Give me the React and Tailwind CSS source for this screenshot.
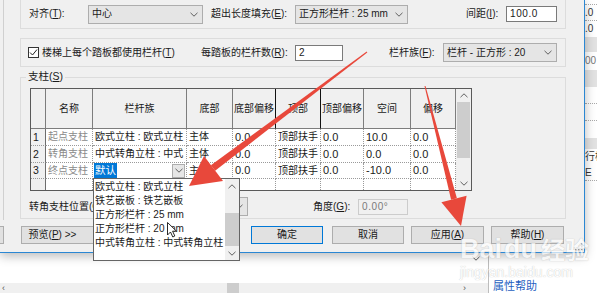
import React from "react";

const Chevron = () => (
  <svg width="8" height="5" viewBox="0 0 8 5" className="shrink-0">
    <path d="M0.5 0.8 L4 4.2 L7.5 0.8" fill="none" stroke="#606060" strokeWidth="1" />
  </svg>
);
const ChevronUp = () => (
  <svg width="8" height="5" viewBox="0 0 8 5" className="shrink-0">
    <path d="M0.5 4.2 L4 0.8 L7.5 4.2" fill="none" stroke="#606060" strokeWidth="1" />
  </svg>
);

function Combo({ className, text }) {
  return (
    <div className={"flex h-[19px] shrink-0 items-center justify-between border border-[#adadad] bg-[#e5e5e5] pl-[3px] pr-[4px] " + className}>
      <span className="whitespace-nowrap">{text}</span>
      <Chevron />
    </div>
  );
}

function Input({ className, text }) {
  return (
    <div className={"flex h-[16px] shrink-0 items-center border border-[#7a7a7a] bg-white pl-[3px] tracking-[0.6px] " + className}>
      {text}
    </div>
  );
}

function Btn({ className, children }) {
  return (
    <div className={"flex h-[18px] shrink-0 items-center justify-center border bg-[#e1e1e1] " + className}>
      {children}
    </div>
  );
}

const H = "flex items-center justify-center border-r border-b border-[#7d7d7d] bg-[#f0f0f0] whitespace-nowrap";
const HB = "flex items-center justify-center border-r border-b border-r-[#111] border-b-[#7d7d7d] bg-[#f0f0f0] whitespace-nowrap";
const RN = "flex items-center pl-[2px] border-r border-b border-r-[#6d6d6d] border-b-[#9a9a9a] [border-bottom-style:dotted] bg-[#f0f0f0] text-[10.5px]";
const C = "flex items-center overflow-hidden whitespace-nowrap pl-[2px] border-r border-b border-dotted border-[#9a9a9a] bg-white";
const CN = "flex items-center overflow-hidden whitespace-nowrap pl-[2px] border-r border-b border-dotted border-[#9a9a9a] bg-white text-[11px]";
const CG = "flex items-center overflow-hidden whitespace-nowrap pl-[2px] border-r border-b border-dotted border-[#9a9a9a] bg-white text-[#8a8a8a]";
const CE = "border-r border-dotted border-[#9a9a9a] bg-white";

export default function App() {
  return (
    <div className="relative h-[293px] w-[597px] overflow-hidden bg-white text-[10px] leading-none text-[#1a1a1a] font-['Liberation_Sans','Noto_Sans_CJK_SC',sans-serif]">
      <div className="flex h-[253px]">
        {/* dialog */}
        <div className="relative z-10 flex h-[253px] w-[585px] shrink-0 border-b border-r border-[#2b87d3] bg-[#f0f0f0] shadow-[0_3px_10px_rgba(0,0,0,0.28)]">
          <div className="flex w-[4px] shrink-0 flex-col">
            <div className="h-[220px] border-r border-[#d0d0d0]" />
            <div className="mt-[6px] h-[18px] border-y border-r border-[#adadad] bg-[#e1e1e1]" />
          </div>
          <div className="flex flex-1 flex-col">
            {/* group 1 */}
            <div className="ml-[16px] flex h-[29px] w-[546px] items-center border-x border-b border-[#dcdcdc] pl-[8px]">
              <span className="w-[59px] shrink-0">对齐(<u>T</u>):</span>
              <Combo className="w-[115px]" text="中心" />
              <span className="ml-[8px] w-[84px] shrink-0 whitespace-nowrap">超出长度填充(<u>E</u>):</span>
              <Combo className="w-[113px]" text="正方形栏杆 :  25 mm" />
              <span className="ml-[58px] w-[40px] shrink-0 whitespace-nowrap">间距(<u>I</u>):</span>
              <Input className="w-[51px]" text="100.0" />
            </div>
            {/* group 2 */}
            <div className="ml-[16px] mt-[9px] flex h-[29px] w-[546px] items-center border border-[#dcdcdc] pl-[7px]">
              <div className="flex w-[173px] shrink-0 items-center gap-[3px]">
                <div className="flex h-[11px] w-[11px] items-center justify-center border border-[#333] bg-white">
                  <svg width="9" height="9" viewBox="0 0 9 9">
                    <path d="M1 4.5 L3.5 7 L8 1.5" fill="none" stroke="#222" strokeWidth="1" />
                  </svg>
                </div>
                <span className="whitespace-nowrap">楼梯上每个踏板都使用栏杆(<u>T</u>)</span>
              </div>
              <span className="w-[94px] shrink-0 whitespace-nowrap">每踏板的栏杆数(<u>R</u>):</span>
              <Input className="w-[48px]" text="2" />
              <span className="ml-[46px] w-[54px] shrink-0 whitespace-nowrap">栏杆族(<u>F</u>):</span>
              <Combo className="w-[114px]" text="栏杆 - 正方形 :  20" />
            </div>
            {/* group 3 */}
            <div className="relative ml-[16px] mt-[10px] h-[142px] w-[546px] border border-[#dcdcdc] pl-[8px] pt-[10px]">
              <span className="absolute left-[5px] top-[-7px] bg-[#f0f0f0] px-[2px] text-[10.5px]">支柱(<u>S</u>)</span>
              <div className="ml-[1px] flex h-[103px] w-[442px] border border-[#5a5a5a]">
                <div className="grid w-[425px] grid-cols-[15px_47px_94px_46px_43px_45px_43px_47px_45px] grid-rows-[40px_17px_17px_16px_11px]">
                  <div className={H} />
                  <div className={H}>名称</div>
                  <div className={H}>栏杆族</div>
                  <div className={H}>底部</div>
                  <div className={HB}>底部偏移</div>
                  <div className={HB}>顶部</div>
                  <div className={H}>顶部偏移</div>
                  <div className={H}>空间</div>
                  <div className={H}>偏移</div>

                  <div className={RN}>1</div>
                  <div className={CG}>起点支柱</div>
                  <div className={C}>欧式立柱 : 欧式立柱</div>
                  <div className={C}>主体</div>
                  <div className={CN}>0.0</div>
                  <div className={C}>顶部扶手</div>
                  <div className={CN}>0.0</div>
                  <div className={CN}>10.0</div>
                  <div className={CN}>0.0</div>

                  <div className={RN}>2</div>
                  <div className={CG}>转角支柱</div>
                  <div className={C}>中式转角立柱 : 中式</div>
                  <div className={C}>主体</div>
                  <div className={CN}>0.0</div>
                  <div className={C}>顶部扶手</div>
                  <div className={CN}>0.0</div>
                  <div className={CN}>0.0</div>
                  <div className={CN}>0.0</div>

                  <div className={RN}>3</div>
                  <div className={CG}>终点支柱</div>
                  <div className="flex items-center border-b border-r border-dotted border-[#9a9a9a] bg-white pl-[1px] pr-[1px]">
                    <span className="bg-[#0078d7] px-[1px] py-[2px] text-[10.5px] text-white">默认</span>
                    <div className="ml-auto flex h-[14px] w-[13px] items-center justify-center border border-[#adadad] bg-[#e6e6e6]">
                      <Chevron />
                    </div>
                  </div>
                  <div className={C}>主体</div>
                  <div className={CN}>0.0</div>
                  <div className={C}>顶部扶手</div>
                  <div className={CN}>0.0</div>
                  <div className={CN}>-10.0</div>
                  <div className={CN}>0.0</div>

                  <div className="border-r border-[#6d6d6d] bg-[#f0f0f0]" />
                  <div className={CE} />
                  <div className={CE} />
                  <div className={CE} />
                  <div className={CE} />
                  <div className={CE} />
                  <div className={CE} />
                  <div className={CE} />
                  <div className={CE} />
                </div>
                <div className="flex w-[15px] flex-col bg-[#f0f0f0]">
                  <div className="flex h-[13px] items-center justify-center"><ChevronUp /></div>
                  <div className="mx-[1px] h-[56px] bg-[#cdcdcd]" />
                  <div className="flex-1" />
                  <div className="flex h-[13px] items-center justify-center"><Chevron /></div>
                </div>
              </div>
              <div className="mt-[6px] flex h-[19px] items-center">
                <span className="w-[89px] shrink-0 whitespace-nowrap">转角支柱位置(<u>C</u>):</span>
                <Combo className="w-[130px]" text="" />
                <span className="ml-[65px] w-[45px] shrink-0 whitespace-nowrap">角度(<u>G</u>):</span>
                <div className="flex h-[16px] w-[50px] shrink-0 items-center border border-[#cccccc] bg-[#f0f0f0] pl-[3px] tracking-[0.6px] text-[#7a7a7a]">0.00°</div>
              </div>
            </div>
            {/* buttons */}
            <div className="mt-[7px] flex h-[18px] items-center">
              <Btn className="ml-[17px] w-[73px] border-[#adadad]"><span className="mr-[10px]">预览(<u>P</u>) &gt;&gt;</span></Btn>
              <Btn className="ml-[157px] w-[72px] border-[#0078d7]">确定</Btn>
              <Btn className="ml-[9px] w-[72px] border-[#adadad]">取消</Btn>
              <Btn className="ml-[7px] w-[73px] border-[#adadad]">应用(<u>A</u>)</Btn>
              <Btn className="ml-[7px] w-[73px] border-[#adadad]">帮助(<u>H</u>)</Btn>
            </div>
          </div>
          <svg className="absolute bottom-[1px] right-[1px]" width="8" height="8" viewBox="0 0 8 8">
            <rect x="6" y="0" width="1.5" height="1.5" fill="#9a9a9a" />
            <rect x="3" y="3" width="1.5" height="1.5" fill="#9a9a9a" />
            <rect x="6" y="3" width="1.5" height="1.5" fill="#9a9a9a" />
            <rect x="0" y="6" width="1.5" height="1.5" fill="#9a9a9a" />
            <rect x="3" y="6" width="1.5" height="1.5" fill="#9a9a9a" />
            <rect x="6" y="6" width="1.5" height="1.5" fill="#9a9a9a" />
          </svg>
        </div>
        {/* right panel of window behind */}
        <div className="flex flex-1 flex-col overflow-hidden bg-white text-[10px] text-[#333]">
          <div className="h-[5px] border-b border-dotted border-[#aaa]" />
          <div className="flex h-[16px] items-center border-b border-dotted border-[#aaa]">.0</div>
          <div className="flex h-[16px] items-center">.0</div>
          <div className="h-[15px] bg-[#e2e2e2]" />
          <div className="flex h-[18px] items-center text-[#777]">00</div>
          <div className="h-[17px] bg-[#e2e2e2]" />
          <div className="h-[17px] border-b border-dotted border-[#aaa]" />
          <div className="h-[17px] border-b border-dotted border-[#aaa]" />
          <div className="h-[17px]" />
          <div className="h-[11px] bg-[#e2e2e2]" />
          <div className="flex h-[16px] items-center overflow-hidden whitespace-nowrap">行构</div>
          <div className="flex h-[16px] items-center border-b border-dotted border-[#aaa]">E</div>
          <div className="flex-1" />
        </div>
      </div>
      {/* area under the dialog */}
      <div className="flex h-[40px]">
        <div className="flex w-[488px] flex-col">
          <div className="flex flex-1 justify-end pr-[8px] pt-[3px]"><Chevron /></div>
          <div className="flex h-[10px] items-center bg-[#f0f0f0] text-[9px] text-[#555]">
            <span className="ml-[2px]">‹</span>
            <div className="ml-[222px] h-[10px] w-[12px] bg-[#cdcdcd]" />
            <span className="ml-auto mr-[22px]">›</span>
          </div>
        </div>
        <div className="w-px bg-[#bdbdbd]" />
        <div className="flex flex-1 items-end pb-[1px] pl-[4px] text-[11px] text-[#1f5fbf]">属性帮助</div>
      </div>

      {/* dropdown list popup */}
      <div className="absolute left-[93px] top-[178px] z-20 flex h-[83px] w-[147px] border border-[#646464] bg-white">
        <div className="flex flex-1 flex-col overflow-hidden pl-[1px] pt-[1px]">
          <div className="flex h-[14px] items-center whitespace-nowrap">欧式立柱 : 欧式立柱</div>
          <div className="flex h-[14px] items-center whitespace-nowrap">铁艺嵌板 : 铁艺嵌板</div>
          <div className="flex h-[14px] items-center whitespace-nowrap">正方形栏杆 : 25 mm</div>
          <div className="flex h-[14px] items-center whitespace-nowrap">正方形栏杆 : 20 mm</div>
          <div className="flex h-[14px] items-center whitespace-nowrap">中式转角立柱 : 中式转角立柱</div>
        </div>
        <div className="flex w-[14px] flex-col bg-[#f0f0f0]">
          <div className="flex h-[14px] items-center justify-center"><ChevronUp /></div>
          <div className="h-[20px]" />
          <div className="h-[33px] bg-[#cdcdcd]" />
          <div className="flex-1" />
          <div className="flex h-[13px] items-center justify-center"><Chevron /></div>
        </div>
      </div>

      {/* mouse cursor */}
      <svg className="absolute left-[167px] top-[222px] z-30" width="11" height="16" viewBox="0 0 11 16">
        <path d="M0.5 0.5 L0.5 13 L3.5 10 L5.8 15 L7.8 14 L5.6 9.2 L9.5 9.2 Z" fill="#fff" stroke="#111" strokeWidth="0.9" />
      </svg>

      {/* watermark */}
      <div className="pointer-events-none absolute left-[460px] top-[236px] z-30 flex flex-col items-start text-white opacity-70 [text-shadow:0_0_1px_#9a9a9a]">
        <div className="flex items-end text-[27px] font-bold leading-none font-['Liberation_Sans','Noto_Sans_CJK_SC',sans-serif]">
          <span>Bai</span><span className="ml-[2px]">du</span><span className="ml-[4px] text-[24px]">经验</span>
        </div>
        <div className="mt-[2px] text-[14px] leading-none font-['Liberation_Sans',sans-serif]">jingyan.baidu.com</div>
      </div>

      {/* red annotation arrows */}
      <svg className="pointer-events-none absolute left-0 top-0 z-40" width="597" height="293" viewBox="0 0 597 293">
        <polygon points="367.3,52.4 366.7,51.6 210.9,165.2 215.1,170.8" fill="#e8483b" />
        <polygon points="189,186 204,156 223,181" fill="#e8483b" />
        <polygon points="425.5,86 424.5,86 451.1,199.7 456.9,198.3" fill="#e8483b" />
        <polygon points="461,226 441.4,202.2 466.6,195.8" fill="#e8483b" />
      </svg>
    </div>
  );
}
